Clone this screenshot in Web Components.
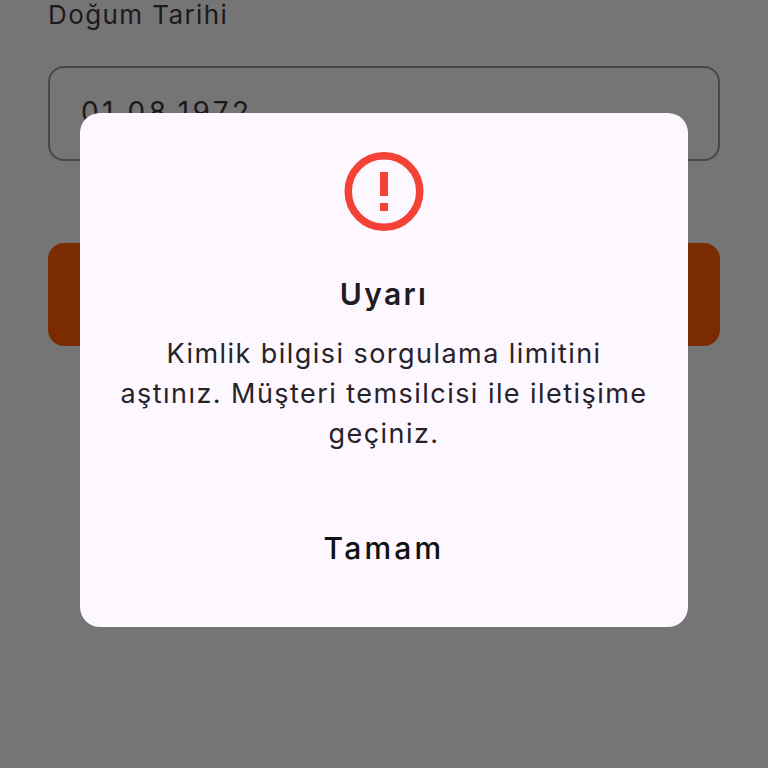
<!DOCTYPE html>
<html lang="tr">
<head>
<meta charset="utf-8">
<title>Uyarı</title>
<style>
  html, body { margin: 0; height: 100%; }
  body { background: #757575; font-family: Inter, "Open Sans", sans-serif; overflow: hidden; }
</style>
</head>
<body>
<date-form label="Doğum Tarihi" value="01.08.1972"></date-form>
<alert-dialog heading="Uyarı" action="Tamam">Kimlik bilgisi sorgulama limitini aştınız. Müşteri temsilcisi ile iletişime geçiniz.</alert-dialog>

<script>
// the form behind the scrim, colours are already dimmed
class DateForm extends HTMLElement {
  constructor() {
    super();
    this.attachShadow({ mode: 'open' });
    this.shadowRoot.innerHTML = `
      <style>
        :host { display: flex; flex-direction: column; height: 768px; box-sizing: border-box; padding: 0 48px; }
        .label { font-size: 26px; line-height: 30px; letter-spacing: 1.4px; color: #1c1a1d; }
        .field {
          box-sizing: border-box; height: 95px; margin-top: 36px;
          border: 2px solid #474747; border-radius: 16px;
          padding: 28px 31px 0; font-size: 28px; line-height: 32px; letter-spacing: 3.4px; color: #1c1a1d;
        }
        .submit { height: 103px; margin-top: 82px; border-radius: 16px; background: #7a2c00; }
      </style>
      <div class="label"></div>
      <div class="field"></div>
      <div class="submit"></div>`;
  }

  connectedCallback() {
    this.shadowRoot.querySelector('.label').textContent = this.getAttribute('label');
    this.shadowRoot.querySelector('.field').textContent = this.getAttribute('value');
  }
}

class AlertDialog extends HTMLElement {
  constructor() {
    super();
    this.attachShadow({ mode: 'open' });
    this.shadowRoot.innerHTML = `
      <style>
        :host {
          position: absolute; left: 80px; top: 113px; width: 608px; height: 514px;
          box-sizing: border-box; padding: 39px 32px 0;
          display: flex; flex-direction: column; align-items: center;
          background: #fdf7ff; border-radius: 20px; text-align: center; color: #1f1b20;
        }
        svg { display: block; width: 80px; height: 80px; }
        h2 { margin: 42px 0 0; font-size: 30px; line-height: 40px; font-weight: 600; letter-spacing: 2.3px; }
        p { margin: 20px 0 0; font-size: 27px; line-height: 40px; font-weight: 400; letter-spacing: 1.45px; color: #262329; }
        button {
          margin-top: 74px; padding: 0; border: 0; background: none; font: inherit;
          font-size: 30px; line-height: 40px; font-weight: 500; letter-spacing: 3.2px; color: #111;
        }
      </style>
      <svg viewBox="0 0 80 80" aria-hidden="true">
        <circle cx="40" cy="39.5" r="35.75" fill="none" stroke="#f44336" stroke-width="7.5"/>
        <rect x="36" y="20" width="8" height="24" fill="#f44336"/>
        <rect x="36" y="51" width="8" height="8" fill="#f44336"/>
      </svg>
      <h2></h2>
      <p><slot></slot></p>
      <button type="button"></button>`;
  }

  connectedCallback() {
    this.shadowRoot.querySelector('h2').textContent = this.getAttribute('heading');
    this.shadowRoot.querySelector('button').textContent = this.getAttribute('action');
  }
}

customElements.define('date-form', DateForm);
customElements.define('alert-dialog', AlertDialog);
</script>
</body>
</html>
